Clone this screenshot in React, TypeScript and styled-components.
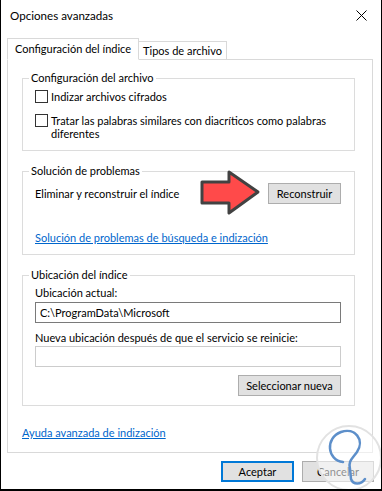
import React from 'react';
import styled, { createGlobalStyle } from 'styled-components';

const GlobalStyles = createGlobalStyle`
    html, body {
        margin: 0;
        padding: 0;
        background: #fff;
    }
    body {
        font-family: Lato, 'Noto Sans', sans-serif;
        font-size: 11px;
        color: #000;
    }
`;

const Window = styled.div`
    position: relative;
    width: 382px;
    height: 491px;
    box-sizing: border-box;
    border: 1px solid #000;
    border-top: none;
    border-bottom-width: 2px;
    background: #fff;
    display: flex;
    flex-direction: column;
    overflow: hidden;
`;

const TitleBar = styled.div`
    height: 30px;
    display: flex;
    align-items: center;
    justify-content: space-between;
    padding: 0 14px 0 9px;
    font-size: 11.6px;
`;

const TabRow = styled.div`
    display: flex;
    align-items: flex-end;
    margin-top: 8px;
    padding-left: 6px;
    position: relative;
    z-index: 1;
`;

const Tab = styled.div<{ $active?: boolean }>`
    box-sizing: border-box;
    height: ${p => (p.$active ? '22px' : '18px')};
    padding: 0 ${p => (p.$active ? '7px' : '4px')};
    display: flex;
    align-items: center;
    border: 1px solid #d9d9d9;
    border-bottom: ${p => (p.$active ? '1px solid #fff' : 'none')};
    border-left: ${p => (p.$active ? '1px solid #d9d9d9' : 'none')};
    background: #fff;
    margin-bottom: ${p => (p.$active ? '-1px' : '0')};
    line-height: 16px;
`;

const Panel = styled.div`
    box-sizing: border-box;
    margin: 0 8px 0 6px;
    height: 394px;
    border: 1px solid #d9d9d9;
    padding: 0 17px 0 14px;
    display: flex;
    flex-direction: column;
`;

const Group = styled.fieldset<{ $top: number; $bottom: number }>`
    margin: ${p => p.$top}px 0 0 0;
    padding: 0 13px ${p => p.$bottom}px 12px;
    border: 1px solid #dcdcdc;
    min-width: 0;
`;

const Legend = styled.legend`
    margin-left: -6px;
    padding: 0 2px;
    line-height: 16px;
`;

const CheckRow = styled.label<{ $top: number }>`
    display: flex;
    align-items: flex-start;
    gap: 3px;
    margin-top: ${p => p.$top}px;
    line-height: 13px;
`;

const CheckBox = styled.span`
    flex: none;
    box-sizing: border-box;
    width: 13px;
    height: 13px;
    border: 1px solid #333;
    background: #fff;
`;

const ActionRow = styled.div`
    display: flex;
    align-items: center;
    justify-content: space-between;
    margin-top: 4px;
    position: relative;
`;

const Button = styled.button<{ $width: number; $focused?: boolean }>`
    box-sizing: border-box;
    width: ${p => p.$width}px;
    height: 21px;
    padding: 0;
    font: inherit;
    color: #000;
    background: #e1e1e1;
    border: ${p => (p.$focused ? '2px solid #0078d7' : '1px solid #adadad')};
`;

const Link = styled.a<{ $top: number }>`
    display: block;
    margin-top: ${p => p.$top}px;
    line-height: 16px;
    color: #0066cc;
    text-decoration: underline;
`;

const Label = styled.div<{ $top: number }>`
    margin-top: ${p => p.$top}px;
    line-height: 16px;
`;

const Field = styled.div<{ $top: number; $dim?: boolean }>`
    box-sizing: border-box;
    margin-top: ${p => p.$top}px;
    width: 306px;
    height: 21px;
    padding: 0 4px;
    display: flex;
    align-items: center;
    border: 1px solid ${p => (p.$dim ? '#cccccc' : '#7a7a7a')};
`;

const RightRow = styled.div<{ $top: number }>`
    display: flex;
    justify-content: flex-end;
    margin-top: ${p => p.$top}px;
`;

const Footer = styled.div`
    display: flex;
    justify-content: flex-end;
    gap: 8px;
    margin-top: 8px;
    padding-right: 7px;
`;

const Arrow = styled.svg`
    position: absolute;
    left: 164px;
    top: -15px;
    width: 64px;
    height: 48px;
`;

const Watermark = styled.svg`
    position: absolute;
    left: 312px;
    top: 422px;
    width: 72px;
    height: 72px;
`;

export default function App() {
    return (
        <Window>
            <GlobalStyles />
            <TitleBar>
                <span>Opciones avanzadas</span>
                <svg width="11" height="11" viewBox="0 0 11 11">
                    <path d="M0.5 0.5 L10.5 10.5 M10.5 0.5 L0.5 10.5" stroke="#000" strokeWidth="1" />
                </svg>
            </TitleBar>

            <TabRow>
                <Tab $active>Configuración del índice</Tab>
                <Tab>Tipos de archivo</Tab>
            </TabRow>

            <Panel>
                <Group $top={10} $bottom={10}>
                    <Legend>Configuración del archivo</Legend>
                    <CheckRow $top={4}>
                        <CheckBox />
                        <span>Indizar archivos cifrados</span>
                    </CheckRow>
                    <CheckRow $top={11}>
                        <CheckBox />
                        <span>Tratar las palabras similares con diacríticos como palabras diferentes</span>
                    </CheckRow>
                </Group>

                <Group $top={12} $bottom={8}>
                    <Legend>Solución de problemas</Legend>
                    <ActionRow>
                        <span>Eliminar y reconstruir el índice</span>
                        <Arrow viewBox="0 0 64 48">
                            <path
                                d="M3 14 L30 14 L30 4 L59 24 L30 45 L30 35 L3 35 Z"
                                fill="#ff4a4a"
                                stroke="#424242"
                                strokeWidth="3"
                                strokeLinejoin="round"
                            />
                        </Arrow>
                        <Button $width={73}>Reconstruir</Button>
                    </ActionRow>
                    <Link $top={26}>Solución de problemas de búsqueda e indización</Link>
                </Group>

                <Group $top={12} $bottom={9}>
                    <Legend>Ubicación del índice</Legend>
                    <Label $top={2}>Ubicación actual:</Label>
                    <Field $top={1}>C:\ProgramData\Microsoft</Field>
                    <Label $top={7}>Nueva ubicación después de que el servicio se reinicie:</Label>
                    <Field $top={0} $dim />
                    <RightRow $top={8}>
                        <Button $width={103}>Seleccionar nueva</Button>
                    </RightRow>
                </Group>

                <Link $top={19}>Ayuda avanzada de indización</Link>
            </Panel>

            <Footer>
                <Button $width={73} $focused>Aceptar</Button>
                <Button $width={72}>Cancelar</Button>
            </Footer>

            <Watermark viewBox="0 0 72 72">
                <circle cx="36" cy="36" r="32" fill="rgba(255,255,255,0.55)" stroke="#e2e2e2" strokeWidth="2" />
                <path
                    d="M30 40 C 14 38, 12 16, 28 10 C 42 5, 52 18, 44 30 C 39 37, 35 39, 37 47 L 38 57 C 40 63, 48 63, 52 57"
                    fill="none"
                    stroke="#5d8fca"
                    strokeWidth="2.5"
                    strokeLinecap="round"
                />
            </Watermark>
        </Window>
    );
}
